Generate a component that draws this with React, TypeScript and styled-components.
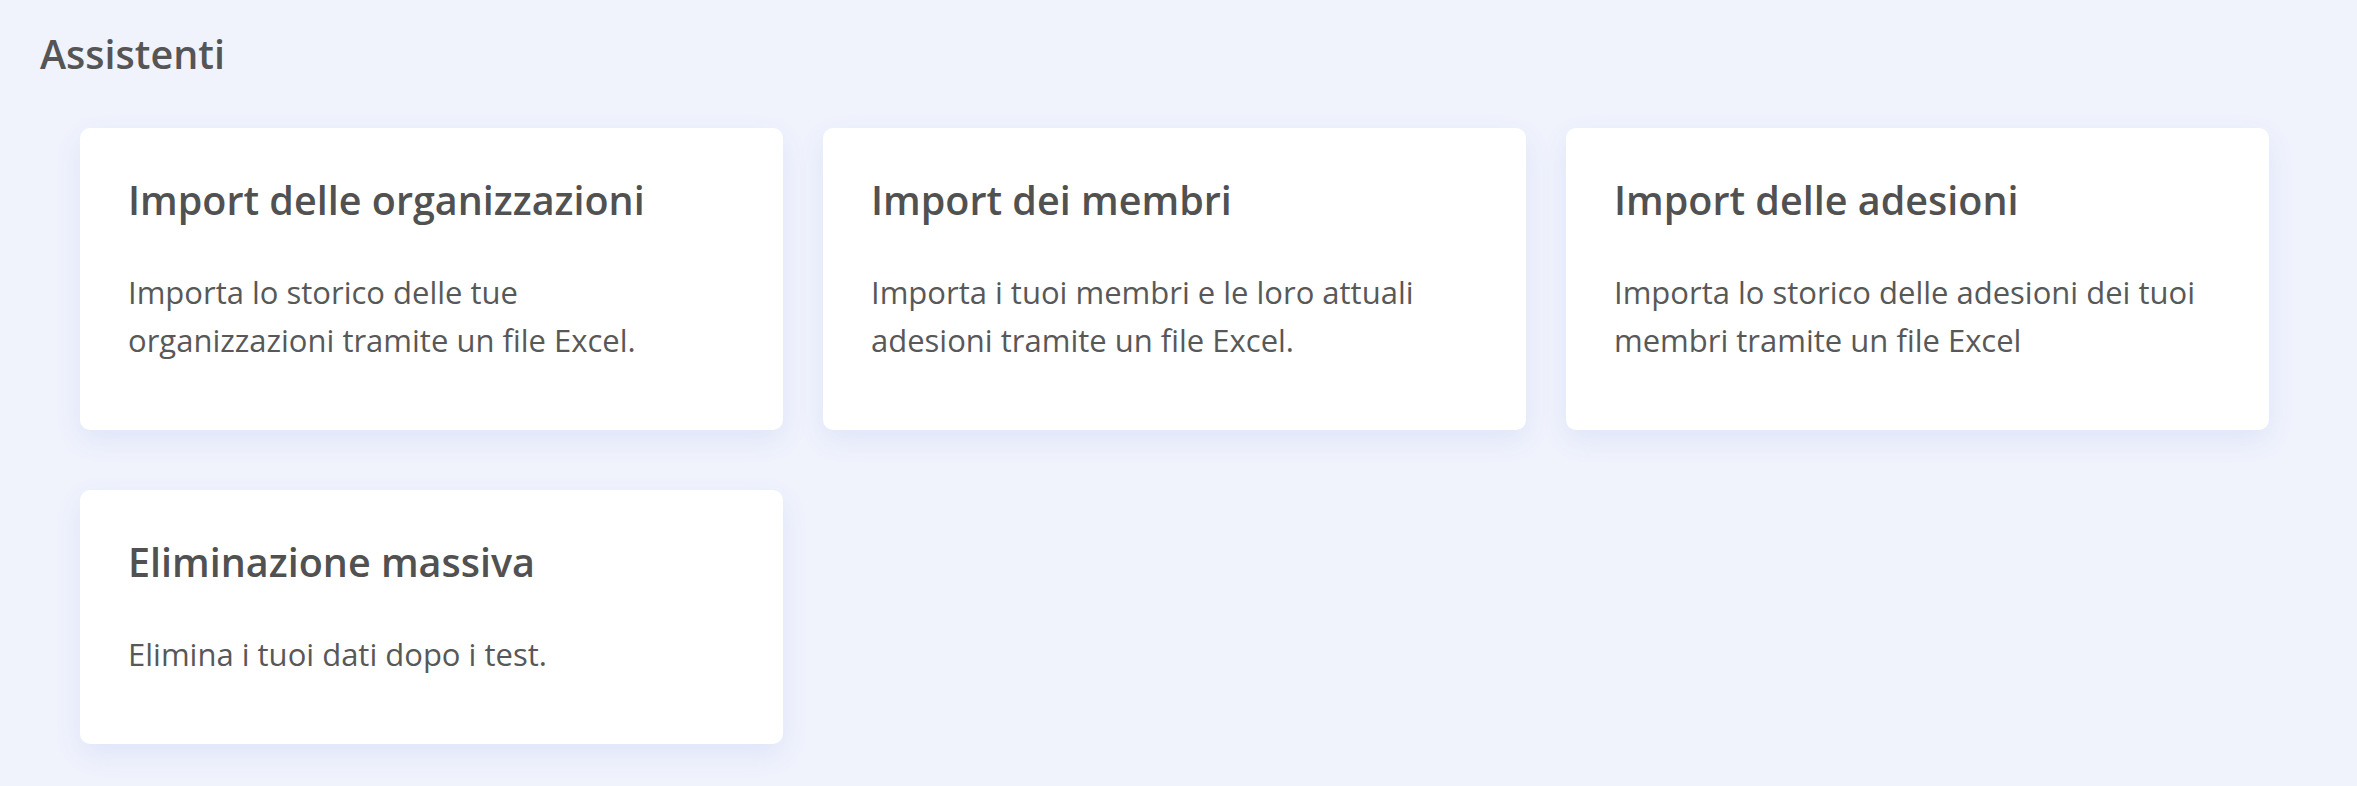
import styled, { createGlobalStyle } from "styled-components";

const GlobalStyle = createGlobalStyle`
  html, body {
    margin: 0;
    padding: 0;
    background: #f0f3fc;
  }
  body {
    font-family: "Open Sans", "Noto Sans", sans-serif;
    color: #555555;
  }
`;

const Page = styled.div`
  min-height: 786px;
  padding: 26px 88px 40px 40px;
  box-sizing: border-box;
`;

const Heading = styled.h1`
  margin: 0;
  font-size: 39.5px;
  line-height: 56px;
  font-weight: 600;
  color: #555555;
`;

const Grid = styled.div`
  display: grid;
  grid-template-columns: repeat(3, 1fr);
  column-gap: 40px;
  row-gap: 60px;
  margin: 46px 0 0 40px;
`;

const Card = styled.div`
  background: #ffffff;
  border-radius: 10px;
  padding: 48px 48px 66px;
  box-shadow: 0 10px 28px rgba(60, 90, 220, 0.09);
`;

const Title = styled.h2`
  margin: 0 0 44px;
  font-size: 39.5px;
  line-height: 48px;
  font-weight: 600;
  color: #515151;
`;

const Text = styled.p`
  margin: 0;
  font-size: 31px;
  line-height: 48px;
  font-weight: 400;
  color: #585858;
`;

const items = [
  {
    title: "Import delle organizzazioni",
    text: ["Importa lo storico delle tue", "organizzazioni tramite un file Excel."],
  },
  {
    title: "Import dei membri",
    text: ["Importa i tuoi membri e le loro attuali", "adesioni tramite un file Excel."],
  },
  {
    title: "Import delle adesioni",
    text: ["Importa lo storico delle adesioni dei tuoi", "membri tramite un file Excel"],
  },
  {
    title: "Eliminazione massiva",
    text: ["Elimina i tuoi dati dopo i test."],
  },
];

function App() {
  return (
    <>
      <GlobalStyle />
      <Page>
        <Heading>Assistenti</Heading>
        <Grid>
          {items.map((item) => (
            <Card key={item.title}>
              <Title>{item.title}</Title>
              <Text>
                {item.text.map((line, i) => (
                  <span key={i}>
                    {line}
                    {i < item.text.length - 1 ? <br /> : null}
                  </span>
                ))}
              </Text>
            </Card>
          ))}
        </Grid>
      </Page>
    </>
  );
}

export default App;
